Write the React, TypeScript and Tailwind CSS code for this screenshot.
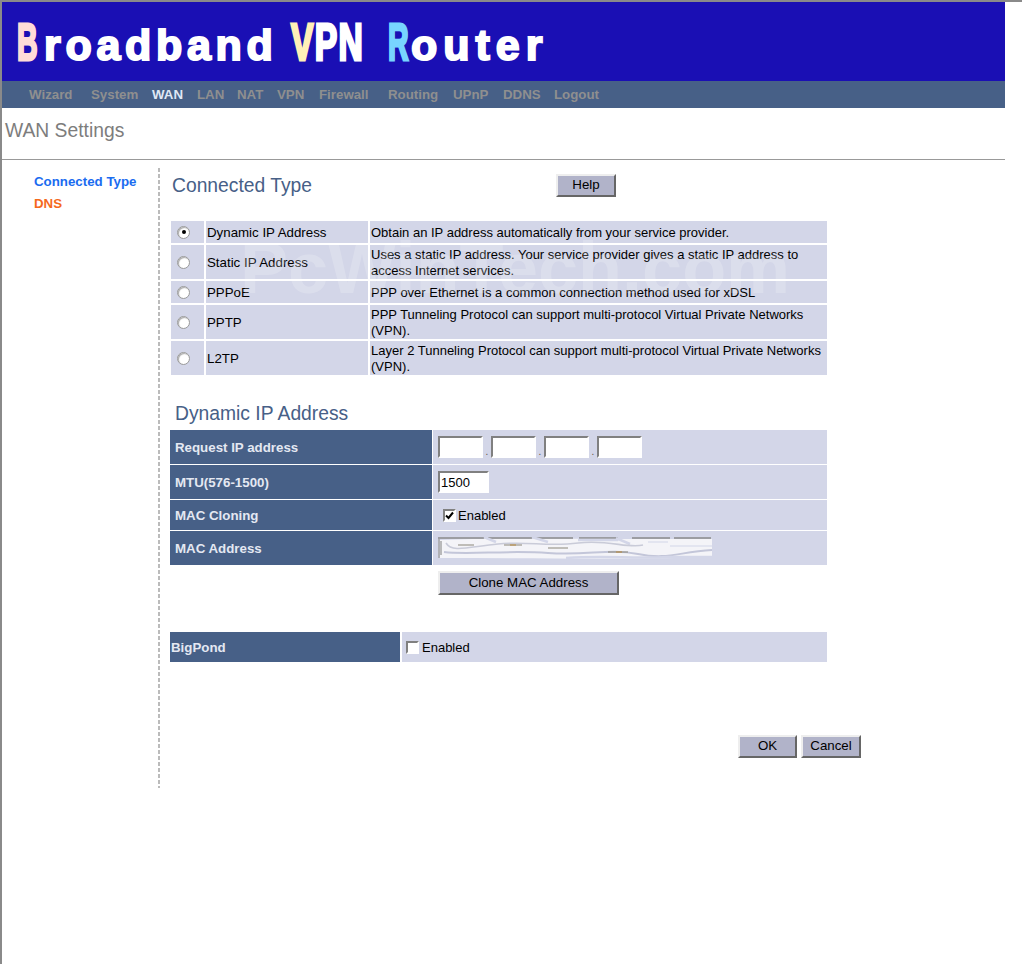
const connTypes = [
  { name: 'Dynamic IP Address', desc: 'Obtain an IP address automatically from your service provider.', h: 'h-[22px]', checked: true },
  { name: 'Static IP Address', desc: 'Uses a static IP address. Your service provider gives a static IP address to access Internet services.', h: 'h-[34px]' },
  { name: 'PPPoE', desc: 'PPP over Ethernet is a common connection method used for xDSL', h: 'h-[22px]' },
  { name: 'PPTP', desc: 'PPP Tunneling Protocol can support multi-protocol Virtual Private Networks (VPN).', h: 'h-[34px]' },
  { name: 'L2TP', desc: 'Layer 2 Tunneling Protocol can support multi-protocol Virtual Private Networks (VPN).', h: 'h-[34px]' },
];

const navItems = [
  { label: 'Wizard', w: 'w-[62px]' },
  { label: 'System', w: 'w-[61px]' },
  { label: 'WAN', w: 'w-[45px]', active: true },
  { label: 'LAN', w: 'w-[40px]' },
  { label: 'NAT', w: 'w-[40px]' },
  { label: 'VPN', w: 'w-[42px]' },
  { label: 'Firewall', w: 'w-[69px]' },
  { label: 'Routing', w: 'w-[65px]' },
  { label: 'UPnP', w: 'w-[50px]' },
  { label: 'DDNS', w: 'w-[51px]' },
  { label: 'Logout', w: 'w-[60px]' },
];

const bevelBtn =
  'block h-full w-full bg-[#b1b3c9] border-2 border-t-[#eeeeee] border-l-[#eeeeee] border-r-[#666] border-b-[#666] text-[13.3px] leading-[16px] text-black';
const insetInput =
  'block bg-white border-2 border-t-[#808080] border-l-[#808080] border-r-white border-b-white text-[13px] px-px outline-none';

function Radio({ checked }: { checked?: boolean }) {
  return (
    <span className="flex h-[13px] w-[13px] items-center justify-center rounded-full border border-[#9a9a9a] bg-white shadow-[inset_1px_1px_1px_#aaa]">
      {checked && <span className="h-[4px] w-[4px] rounded-full bg-black" />}
    </span>
  );
}

function Check({ checked }: { checked?: boolean }) {
  return (
    <span className="flex h-[13px] w-[13px] items-center justify-center border-2 border-t-[#808080] border-l-[#808080] border-r-white border-b-white bg-white">
      {checked && (
        <svg width="9" height="9" viewBox="0 0 9 9" className="shrink-0">
          <path d="M1 4.5 L3.5 7 L8 1.5" fill="none" stroke="#000" strokeWidth="2" />
        </svg>
      )}
    </span>
  );
}

// blurred-out MAC address from the original capture
function MacSmudge() {
  return (
    <svg width="274" height="23" viewBox="0 0 274 23" className="block">
      <path d="M2 3 C60 1 120 2 274 2 L274 20 C200 23 100 21 2 21 Z" fill="#f4f4f8" />
      <path d="M0 1 H46 M50 1 H94 M98 1 H135 M141 1 H180 M194 1 H232 M236 1 H273" stroke="#8a8a8a" strokeWidth="1.5" fill="none" />
      <path d="M1 2 V21 M3 4 V18" stroke="#a5a5a5" strokeWidth="1.5" fill="none" />
      <path d="M46 0 L58 5 M94 0 L110 5 M140 3 H180 M178 1 L192 7" stroke="#d3d6e8" strokeWidth="2.5" fill="none" />
      <path d="M8 6 C14 16 30 10 60 7 S110 10 140 6 S190 12 205 8" stroke="#c9cbd8" strokeWidth="1.6" fill="none" />
      <path d="M6 15 C30 18 70 13 110 16 S170 11 200 17 S240 15 274 13" stroke="#c3c6d9" strokeWidth="2" fill="none" />
      <path d="M20 8 H36 M66 8 H84 M110 11 H130 M170 15 H190" stroke="#8a8578" strokeWidth="1.2" />
      <path d="M72 8 H78 M178 15 H184" stroke="#b98a3c" strokeWidth="1.2" />
      <path d="M128 21 C170 18 190 22 230 20 L274 20" stroke="#d3d6e8" strokeWidth="2.5" fill="none" />
      <path d="M210 5 H230 M232 9 H274" stroke="#e3e5f0" strokeWidth="2" fill="none" />
    </svg>
  );
}

function BigCap({ children, className }: { children: string; className: string }) {
  return <span className={`inline-block origin-left text-[51px] leading-none ${className}`}>{children}</span>;
}

export default function App() {
  return (
    <div className="relative h-[964px] w-[1022px] overflow-hidden bg-white font-['Liberation_Sans',Arial,sans-serif]">
      <div className="h-full border-l-2 border-t-2 border-[#8a8a8a]">
        <div className="w-[1003px]">
          {/* Banner */}
          <div className="flex h-[79px] items-center overflow-hidden bg-[#1a0fb4] pl-[15px] pt-[2px] font-bold text-white">
            <div className="flex items-baseline text-[43px] leading-none tracking-[4.7px] whitespace-pre [-webkit-text-stroke:2px_white]">
              <div className="w-[27px]">
                <BigCap className="scale-x-[.56] tracking-normal text-[#ffdcd8] [-webkit-text-stroke:3px_#ffdcd8]">B</BigCap>
              </div>
              <div className="w-[247px]">roadband</div>
              <div className="w-[97px]">
                <span className="inline-block origin-left scale-x-[.66] text-[51px] leading-none tracking-[2px] [-webkit-text-stroke:3px_white]">
                  <span className="text-[#fff0b8] [-webkit-text-stroke:3px_#fff0b8]">V</span>PN
                </span>
              </div>
              <div className="w-[23px]">
                <BigCap className="scale-x-[.56] tracking-normal text-[#78d4ff] [-webkit-text-stroke:3px_#78d4ff]">R</BigCap>
              </div>
              <div className="tracking-[6px]">outer</div>
            </div>
          </div>

          {/* Nav */}
          <div className="flex h-[27px] items-center bg-[#476087] pl-[27px] pt-px text-[13.3px] font-bold text-[#8f8f8f]">
            {navItems.map((item) => (
              <span key={item.label} className={`${item.w} ${item.active ? 'text-[#dfe8f5]' : ''}`}>
                {item.label}
              </span>
            ))}
          </div>

          {/* Page title */}
          <div className="h-[52px] border-b border-[#999] pl-[3px] pt-[11px] text-[19.3px] leading-[24px] text-[#7d7d7d]">
            WAN Settings
          </div>

          <div className="flex">
            {/* Side menu */}
            <div className="w-[32px]" />
            <div className="w-[124px] pt-[11px] text-[13.3px] font-bold leading-[22px]">
              <div className="text-[#1a6cf0]">Connected Type</div>
              <div className="text-[#f5691c]">DNS</div>
            </div>

            <div className="mt-[8px] h-[620px] w-[2px] bg-[repeating-linear-gradient(to_bottom,#bbbbbb_0,#bbbbbb_4px,transparent_4px,transparent_6px)]" />

            {/* Main */}
            <div className="mt-[8px] h-[620px] w-[701px] pl-[10px]">
              <div className="flex h-[53px] items-start pt-[6px]">
                <div className="w-[386px] pl-[2px] text-[19.3px] leading-[24px] text-[#476087]">Connected Type</div>
                <div className="h-[23px] w-[60px]">
                  <button className={`${bevelBtn} pb-[2px]`}>Help</button>
                </div>
              </div>

              {/* Connection types */}
              <div className="ml-px grid w-[656px] grid-cols-[33px_162px_457px] gap-[2px] text-[13px] leading-[16px] text-black">
                {connTypes.map((row) => (
                  <div key={row.name} className="contents">
                    <div className={`${row.h} flex items-center bg-[#d3d6e8] pl-[6px]`}>
                      <Radio checked={row.checked} />
                    </div>
                    <div className={`${row.h} flex items-center bg-[#d3d6e8] pl-[1px] pt-px text-[13.3px]`}>{row.name}</div>
                    <div className={`${row.h} flex items-center bg-[#d3d6e8] pl-[1px] pt-px`}>
                      <span>{row.desc}</span>
                    </div>
                  </div>
                ))}
              </div>

              <div className="flex h-[55px] items-end pb-[4px] pl-[5px] text-[19.3px] leading-[24px] text-[#476087]">
                Dynamic IP Address
              </div>

              {/* Settings */}
              <div className="grid w-[657px] grid-cols-[262px_1fr] gap-x-[1px] gap-y-[1px] text-[13.3px] text-black">
                <div className="flex h-[34px] items-center bg-[#476087] pl-[5px] pt-px font-bold text-[#e4e8f2]">Request IP address</div>
                <div className="flex h-[34px] items-center bg-[#d3d6e8] pl-[5px]">
                  {[0, 1, 2, 3].map((i) => (
                    <div key={i} className="flex items-end">
                      <input className={`${insetInput} h-[22px] w-[45px]`} />
                      {i < 3 && <span className="w-[8px] text-center text-[10px] leading-[12px] text-[#665544]">.</span>}
                    </div>
                  ))}
                </div>
                <div className="flex h-[34px] items-center bg-[#476087] pl-[5px] pt-px font-bold text-[#e4e8f2]">MTU(576-1500)</div>
                <div className="flex h-[34px] items-center bg-[#d3d6e8] pl-[5px]">
                  <input className={`${insetInput} h-[22px] w-[51px]`} defaultValue="1500" />
                </div>
                <div className="flex h-[30px] items-center bg-[#476087] pl-[5px] pt-px font-bold text-[#e4e8f2]">MAC Cloning</div>
                <div className="flex h-[30px] items-center bg-[#d3d6e8] pl-[10px] text-[13px]">
                  <Check checked />
                  <span className="ml-[2px] pt-[2px]">Enabled</span>
                </div>
                <div className="flex h-[34px] items-center bg-[#476087] pl-[5px] pt-px font-bold text-[#e4e8f2]">MAC Address</div>
                <div className="flex h-[34px] items-center bg-[#d3d6e8] pl-[5px]">
                  <MacSmudge />
                </div>
              </div>

              <div className="ml-[268px] mt-[6px] h-[24px] w-[181px]">
                <button className={bevelBtn}>Clone MAC Address</button>
              </div>

              {/* BigPond */}
              <div className="mt-[37px] grid h-[30px] w-[657px] grid-cols-[230px_1fr] gap-x-[2px] text-[13.3px]">
                <div className="flex items-center bg-[#476087] pl-[1px] pt-px font-bold text-[#e4e8f2]">BigPond</div>
                <div className="flex items-center bg-[#d3d6e8] pl-[4px] text-[13px] text-black">
                  <Check />
                  <span className="ml-[3px] pt-[2px]">Enabled</span>
                </div>
              </div>

              <div className="mt-[73px] flex h-[23px] w-[691px] justify-end gap-[4px]">
                <div className="w-[59px]">
                  <button className={`${bevelBtn} pb-[2px]`}>OK</button>
                </div>
                <div className="w-[60px]">
                  <button className={`${bevelBtn} pb-[2px]`}>Cancel</button>
                </div>
              </div>
            </div>
          </div>
        </div>
      </div>

      {/* Watermark */}
      <div className="pointer-events-none absolute left-[240px] top-[232px] text-[72px] font-bold leading-none text-white/20">
        PcWinTech.com
      </div>
    </div>
  );
}
